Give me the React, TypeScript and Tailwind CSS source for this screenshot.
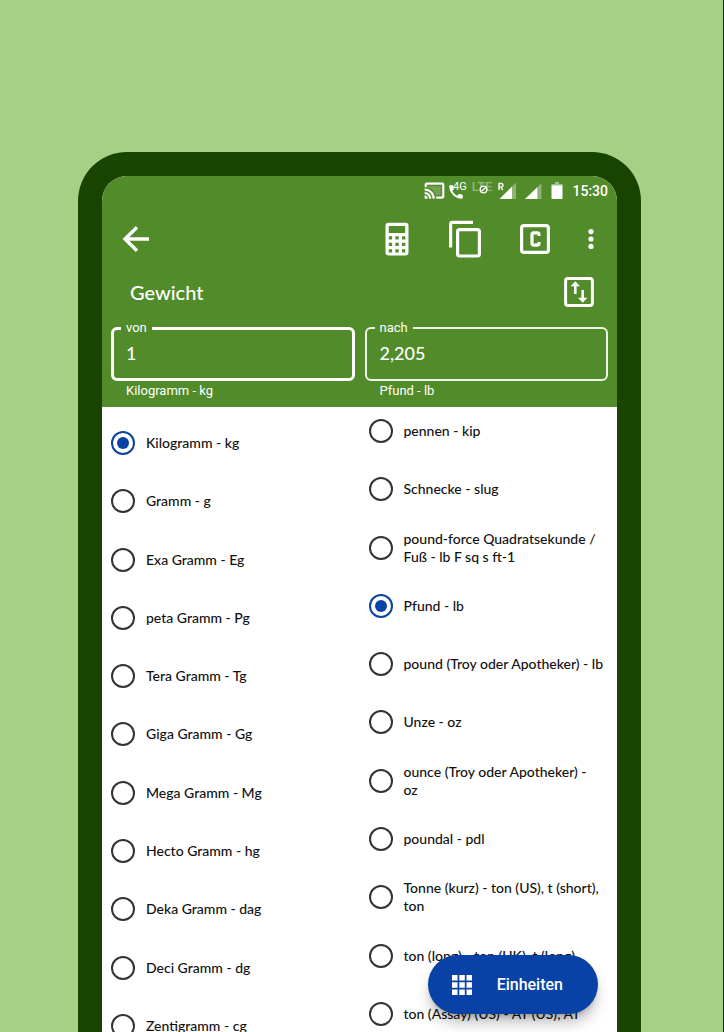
import { useState } from "react";

const fromUnits = [
  "Kilogramm - kg",
  "Gramm - g",
  "Exa Gramm - Eg",
  "peta Gramm - Pg",
  "Tera Gramm - Tg",
  "Giga Gramm - Gg",
  "Mega Gramm - Mg",
  "Hecto Gramm - hg",
  "Deka Gramm - dag",
  "Deci Gramm - dg",
  "Zentigramm - cg",
];

const toUnits = [
  "pennen - kip",
  "Schnecke - slug",
  "pound-force Quadratsekunde /\nFuß - lb F sq s ft-1",
  "Pfund - lb",
  "pound (Troy oder Apotheker) - lb",
  "Unze - oz",
  "ounce (Troy oder Apotheker) -\noz",
  "poundal - pdl",
  "Tonne (kurz) - ton (US), t (short),\nton",
  "ton (long) - ton (UK), t (long)",
  "ton (Assay) (US) - AT (US), AT",
];

function StatusBar() {
  return (
    <div className="flex h-[29px] items-center justify-end pr-[9px] font-['Roboto',sans-serif] text-white">
      <svg className="size-[21px]" viewBox="0 0 24 24" fill="currentColor" aria-hidden="true">
        <path d="M21 3H3c-1.1 0-2 .9-2 2v3h2V5h18v14h-7v2h7c1.1 0 2-.9 2-2V5c0-1.1-.9-2-2-2zM1 18v3h3c0-1.66-1.34-3-3-3zm0-4v2c2.76 0 5 2.24 5 5h2c0-3.87-3.13-7-7-7zm0-4v2c4.97 0 9 4.03 9 9h2c0-6.08-4.93-11-11-11z" stroke="currentColor" strokeWidth=".5" />
        <path d="M5 7v1.6c4 1.3 7.100 4.400 8.400 8.400H19V7z" opacity=".2" />
      </svg>
      <div className="ml-[2px] flex items-start">
        <svg className="mt-[2px] size-[18px]" viewBox="0 0 24 24" fill="currentColor" aria-hidden="true">
          <path d="M20.010 15.380c-1.230 0-2.420-.2-3.530-.56-.35-.12-.74-.03-1.010.24l-1.570 1.970c-2.830-1.350-5.480-3.900-6.890-6.830l1.950-1.660c.27-.28.350-.67.240-1.020-.37-1.110-.56-2.300-.56-3.530 0-.54-.45-.99-.99-.99H4.190C3.650 3 3 3.240 3 3.990 3 13.280 10.730 21 20.010 21c.71 0 .99-.63.99-1.180v-3.450c0-.54-.45-.99-.99-.99z" />
        </svg>
        <span className="-ml-[12px] text-[11px] leading-[12px]">4G</span>
      </div>
      <div className="relative ml-[5px] mb-[7px] text-[13px] leading-[14px] font-medium text-white/40">
        LTE
        <svg className="absolute top-[5px] left-[7px] size-[9px] text-white" viewBox="0 0 10 10" fill="#528b2a" stroke="currentColor" strokeWidth="1.500" aria-hidden="true">
          <circle cx="5" cy="5" r="3.700" />
          <path d="M3 7 7 3" />
        </svg>
      </div>
      <svg className="ml-[6px] h-[18px] w-[18px]" viewBox="0 0 18 18" fill="currentColor" aria-hidden="true">
        <path d="M14 4.500 18 .5V17H14z" opacity=".35" />
        <path d="M14 4.500V17H1.500z" />
        <path d="M1 8V1.500h2.200a1.700 1.700 0 0 1 0 3.600H1M3 5l1.700 3" fill="none" stroke="currentColor" strokeWidth="1.400" />
      </svg>
      <svg className="ml-[8px] h-[18px] w-[18px]" viewBox="0 0 18 18" fill="currentColor" aria-hidden="true">
        <path d="M13.500 5 17.500 1V17H13.500z" opacity=".35" />
        <path d="M13.500 5V17H1z" />
      </svg>
      <svg className="ml-[9px] h-[18px] w-[12px]" viewBox="0 0 12 18" fill="currentColor" aria-hidden="true">
        <path d="M4 0h4v2h3.500v2.500H.5V2H4z" opacity=".45" />
        <path d="M.5 3.500h11v12.700a.8.8 0 0 1-.8.8H1.300a.8.8 0 0 1-.8-.8z" />
      </svg>
      <span className="ml-[9px] text-[14px] leading-[18px] font-medium">15:30</span>
    </div>
  );
}

function Toolbar() {
  return (
    <div className="flex h-[67px] items-center pr-[8px] pl-[14px]">
      <button type="button" aria-label="Zurück" className="flex size-10 items-center justify-center">
        <svg className="size-8" viewBox="0 0 32 32" fill="none" stroke="currentColor" strokeWidth="3.400" aria-hidden="true">
          <path d="M29 16H5M17 4.200 5 16l12 11.800" />
        </svg>
      </button>
      <button type="button" aria-label="Rechner" className="mr-[28px] ml-auto flex size-10 items-center justify-center">
        <svg className="h-[34px] w-[26px]" viewBox="0 0 26 34" aria-hidden="true">
          <rect x="1.500" y=".8" width="23" height="32.600" rx="3" fill="currentColor" />
          <g fill="#528b2a">
            <path d="M4.800 4h16.400v7H4.800z" />
            <path d="M4.800 14.200h3.300v3.300H4.800zM11.400 14.200h3.300v3.300h-3.300zM18 14.200h3.300v3.300H18zM4.800 20.700h3.300V24H4.800zM11.400 20.700h3.300V24h-3.300zM18 20.700h3.300V24H18zM4.800 27.200h3.300v3.300H4.800zM11.400 27.200h3.300v3.300h-3.300zM18 27.200h3.300v3.300H18z" />
          </g>
        </svg>
      </button>
      <button type="button" aria-label="Kopieren" className="mr-[30px] flex size-10 items-center justify-center">
        <svg className="h-[38px] w-[34px]" viewBox="0 0 34 38" fill="none" stroke="currentColor" strokeWidth="3.200" aria-hidden="true">
          <path d="M2.600 27.500V4.200c0-1 .8-1.800 1.800-1.800H25" />
          <rect x="9.600" y="9.600" width="21.800" height="26.400" rx="2" />
        </svg>
      </button>
      <button type="button" aria-label="Löschen" className="mr-[18px] flex size-10 items-center justify-center">
        <svg className="size-8" viewBox="0 0 32 32" fill="none" stroke="currentColor" strokeWidth="3.200" aria-hidden="true">
          <rect x="2.600" y="2.600" width="26.800" height="26.800" rx="2.500" />
          <path d="M20 13v-1.300c0-1-.8-1.800-1.800-1.800h-3.400c-1 0-1.800.8-1.800 1.800v8.600c0 1 .8 1.800 1.800 1.800h3.400c1 0 1.800-.8 1.800-1.800V19" />
        </svg>
      </button>
      <button type="button" aria-label="Mehr" className="flex size-9 items-center justify-center">
        <svg className="h-5 w-2" viewBox="0 0 8 20" fill="currentColor" aria-hidden="true">
          <circle cx="4" cy="2.600" r="2.600" />
          <circle cx="4" cy="10" r="2.600" />
          <circle cx="4" cy="17.400" r="2.600" />
        </svg>
      </button>
    </div>
  );
}

type ValueFieldProps = {
  id: string;
  label: string;
  value: string;
  helper: string;
  active?: boolean;
  onChange?: (value: string) => void;
};

function ValueField({ id, label, value, helper, active, onChange }: ValueFieldProps) {
  return (
    <div className="min-w-0">
      <fieldset
        className={
          active
            ? "h-[61px] rounded-md border-[3px] border-white pr-3 pl-[7px]"
            : "h-[61px] rounded-md border-2 border-white/90 pr-3 pl-2"
        }
      >
        <legend className="px-[5px] font-['Roboto',sans-serif] text-[13px] leading-[16px]">
          <label htmlFor={id}>{label}</label>
        </legend>
        <input
          id={id}
          value={value}
          readOnly={!onChange}
          onChange={(e) => onChange?.(e.target.value)}
          className="block h-[34px] w-full bg-transparent px-[5px] text-[18px] leading-[24px] font-medium outline-none"
        />
      </fieldset>
      <p className="pt-[2px] pl-[15px] font-['Roboto',sans-serif] text-[13px] leading-[16px]">{helper}</p>
    </div>
  );
}

type UnitListProps = {
  name: string;
  units: string[];
  selected: string;
  onSelect: (unit: string) => void;
};

function UnitList({ name, units, selected, onSelect }: UnitListProps) {
  return (
    <div className="grid min-h-[641px] auto-rows-fr">
      {units.map((unit) => (
        <label key={unit} className="flex items-center gap-[11px] pl-[9px]">
          <input
            type="radio"
            name={name}
            checked={selected === unit}
            onChange={() => onSelect(unit)}
            className="flex size-6 shrink-0 appearance-none items-center justify-center rounded-full border-2 border-[#333335] checked:border-[#0b43a0] checked:before:size-3 checked:before:rounded-full checked:before:bg-[#0842a6] checked:before:content-['']"
          />
          <span className="text-[14px] leading-[18px] font-medium whitespace-pre">{unit}</span>
        </label>
      ))}
    </div>
  );
}

export default function App() {
  const [from, setFrom] = useState(fromUnits[0]);
  const [to, setTo] = useState(toUnits[3]);
  const [amount, setAmount] = useState("1");

  return (
    <div className="flex h-screen flex-col overflow-hidden border-r border-[#1d2819] bg-[#a5d086] pt-[152px] pr-[82px] pl-[78px] font-['Lato','Liberation_Sans',sans-serif] text-[#111]">
      <main className="flex min-h-0 flex-1 rounded-t-[49px] bg-[#184400] px-6 pt-6">
        <div className="relative flex min-w-0 flex-1 flex-col overflow-hidden rounded-t-[25px] bg-white">
          <header className="z-10 bg-[#528b2a] text-white">
            <StatusBar />
            <Toolbar />
            <div className="flex h-[40px] items-center justify-between pr-[22px] pl-[28px]">
              <h1 className="text-[20px] leading-[24px] font-medium">Gewicht</h1>
              <button type="button" aria-label="Tauschen">
                <svg className="block size-8" viewBox="0 0 32 32" fill="none" stroke="currentColor" aria-hidden="true">
                  <rect x="2.600" y="2.600" width="26.800" height="26.800" rx="2.500" strokeWidth="3" />
                  <path d="M12.300 18V8M19.700 14v10" strokeWidth="2.600" />
                  <path d="M12.300 5.200 17 10.200H7.600zM19.700 26.800l4.700-5H15z" fill="currentColor" stroke="none" />
                </svg>
              </button>
            </div>
            <div className="grid grid-cols-2 gap-[10px] px-[9px] pt-[8px] pb-[8px]">
              <ValueField id="from-value" label="von" value={amount} helper={from} active onChange={setAmount} />
              <ValueField id="to-value" label="nach" value="2,205" helper={to} />
            </div>
          </header>
          <div className="grid min-h-0 flex-1 grid-cols-2">
            <div className="pt-[7px]">
              <UnitList name="from" units={fromUnits} selected={from} onSelect={setFrom} />
            </div>
            <div className="-mt-[5px]">
              <UnitList name="to" units={toUnits} selected={to} onSelect={setTo} />
            </div>
          </div>
          <button
            type="button"
            className="absolute right-[19px] bottom-[18px] flex h-[59px] items-center gap-[25px] rounded-full bg-[#0842a6] pr-[35px] pl-[24px] font-['Roboto',sans-serif] text-[16px] leading-[20px] font-medium text-white shadow-lg shadow-black/30"
          >
            <svg className="size-5" viewBox="0 0 20 20" fill="currentColor" aria-hidden="true">
              <path d="M0 0h5.500v5.500H0zM7.300 0h5.500v5.500H7.300zM14.500 0H20v5.500h-5.500zM0 7.300h5.500v5.500H0zM7.300 7.300h5.500v5.500H7.300zM14.500 7.300H20v5.500h-5.500zM0 14.500h5.500V20H0zM7.300 14.500h5.500V20H7.300zM14.500 14.500H20V20h-5.500z" />
            </svg>
            Einheiten
          </button>
        </div>
      </main>
    </div>
  );
}
